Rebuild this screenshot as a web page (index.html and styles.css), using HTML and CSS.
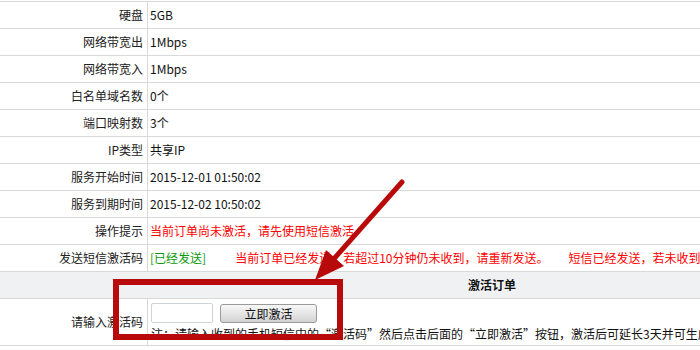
FILE: index.html
```html
<!DOCTYPE html>
<html>
<head>
<meta charset="utf-8">
<link rel="stylesheet" href="styles.css">
</head>
<body>
<div class="page">
<table class="info">
<tr><td class="lbl">硬盘</td><td class="val">5GB</td></tr>
<tr><td class="lbl">网络带宽出</td><td class="val">1Mbps</td></tr>
<tr><td class="lbl">网络带宽入</td><td class="val">1Mbps</td></tr>
<tr><td class="lbl">白名单域名数</td><td class="val">0个</td></tr>
<tr><td class="lbl">端口映射数</td><td class="val">3个</td></tr>
<tr><td class="lbl">IP类型</td><td class="val">共享IP</td></tr>
<tr><td class="lbl">服务开始时间</td><td class="val">2015-12-01 01:50:02</td></tr>
<tr><td class="lbl">服务到期时间</td><td class="val">2015-12-02 10:50:02</td></tr>
<tr><td class="lbl">操作提示</td><td class="val red">当前订单尚未激活，请先使用短信激活</td></tr>
<tr><td class="lbl">发送短信激活码</td><td class="val"><span class="green">[已经发送]</span><span class="red msg1">当前订单已经发送，若超过10分钟仍未收到，请重新发送。</span><span class="red msg2">短信已经发送，若未收到请稍后再试</span></td></tr>
<tr><td class="head" colspan="2">激活订单</td></tr>
<tr class="last"><td class="lbl">请输入激活码</td><td class="val act">
<div class="form"><input class="code" type="text"><button class="btn">立即激活</button></div>
<div class="note">注：请输入收到的手机短信中的“激活码”然后点击后面的“立即激活”按钮，激活后可延长3天并可生成工单。</div>
</td></tr>
</table>
<svg class="mark" width="700" height="350" viewBox="0 0 700 350">
<rect x="116" y="282" width="224" height="55" fill="none" stroke="#b80a0a" stroke-width="6"/>
<line x1="402" y1="182" x2="332" y2="261" stroke="#b80a0a" stroke-width="5" stroke-linecap="round"/>
<polygon points="315,280 344,266 326,250" fill="#b80a0a"/>
</svg>
</div>
</body>
</html>
```
FILE: styles.css
```css
html, body {
  margin: 0;
  padding: 0;
  background: #fff;
  overflow: hidden;
}
.page {
  position: relative;
  width: 700px;
  height: 350px;
  overflow: hidden;
}
.info {
  border-collapse: separate;
  border-spacing: 0;
  width: 984px;
  margin-top: 1px;
  border-top: 1px solid #d9d9d9;
  font-family: "SimSun", "Noto Sans CJK SC", sans-serif;
  font-size: 12px;
  color: #111;
}
.info td {
  height: 26px;
  padding: 0;
  border-bottom: 1px solid #d9d9d9;
  white-space: nowrap;
  vertical-align: middle;
  line-height: 14px;
}
.info td.lbl {
  width: 143px;
  padding-right: 4px;
  text-align: right;
  border-right: 1px solid #d9d9d9;
  color: #222;
}
.info td.val {
  padding-left: 2px;
  text-align: left;
}
.red { color: #ff0000; }
.green { color: #0a9a0a; }
.msg1 { margin-left: 29px; }
.msg2 { margin-left: 20px; }
.info td.head {
  background: #f0f1f3;
  text-align: center;
  font-weight: bold;
  color: #111;
}
.last td { height: 46px; }
.info td.act {
  vertical-align: top;
  padding-top: 4px;
  padding-left: 3px;
  height: 42px;
}
.form {
  display: flex;
  align-items: center;
  gap: 7px;
  height: 20px;
}
.code {
  box-sizing: border-box;
  width: 62px;
  height: 20px;
  margin: 0;
  border: 1px solid #cdd3d8;
  border-radius: 2px;
  padding: 0 3px;
  background: #fff;
}
.btn {
  box-sizing: border-box;
  width: 97px;
  height: 19px;
  margin: 0;
  padding: 0;
  border: 1px solid #9a9a9a;
  border-radius: 3px;
  background: linear-gradient(#f7f7f7, #e4e4e4 55%, #d2d2d2);
  font-family: "SimSun", "Noto Sans CJK SC", sans-serif;
  font-size: 12px;
  color: #111;
  line-height: 17px;
}
.note {
  margin-top: 4px;
  line-height: 14px;
  color: #111;
}
.mark {
  position: absolute;
  left: 0;
  top: 0;
  pointer-events: none;
}
```
